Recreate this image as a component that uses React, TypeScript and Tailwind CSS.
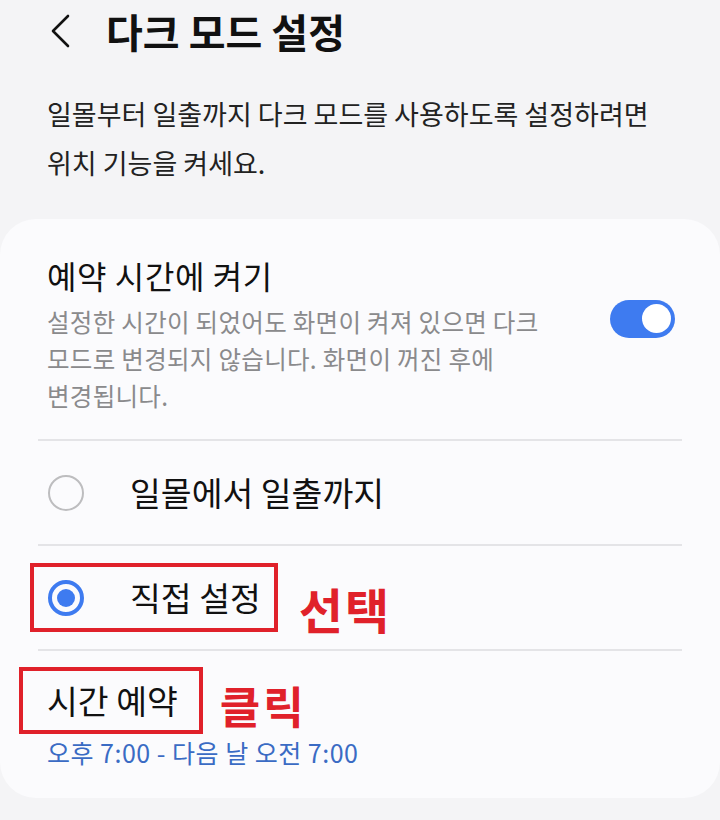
import React from "react";

function Radio({ checked }: { checked: boolean }) {
  return checked ? (
    <div className="w-[36px] h-[36px] rounded-full border-[4px] border-[#3e7bf0] flex items-center justify-center">
      <div className="w-[18px] h-[18px] rounded-full bg-[#3e7bf0]" />
    </div>
  ) : (
    <div className="w-[36px] h-[36px] rounded-full border-[2.5px] border-[#bdbdbf]" />
  );
}

export default function App() {
  return (
    <div className="w-[720px] min-h-[820px] bg-[#f4f4f6] text-[#111] font-['Noto_Sans_CJK_KR','Noto_Sans',sans-serif]">
      {/* Header */}
      <div className="h-[62px] flex items-center pl-[50px]">
        <svg width="20" height="34" viewBox="0 0 20 34" fill="none">
          <path d="M18 2 L3 17 L18 32" stroke="#111" strokeWidth="2.6" strokeLinecap="round" strokeLinejoin="round" />
        </svg>
        <h1 className="ml-[36px] text-[40px] font-bold leading-none">다크 모드 설정</h1>
      </div>

      {/* Description */}
      <p className="px-[47px] pt-[27px] text-[27px] leading-[49px] text-[#222]">
        일몰부터 일출까지 다크 모드를 사용하도록 설정하려면
        <br />
        위치 기능을 켜세요.
      </p>

      {/* Card */}
      <div className="mt-[32px] bg-[#fbfbfd] rounded-[36px] pt-[36px] pb-[31px]">
        <div className="flex items-center pl-[47px] pr-[45px]">
          <div className="flex-1">
            <div className="text-[32px] leading-[40px] tracking-[0.6px] text-[#111]">예약 시간에 켜기</div>
            <div className="mt-[8px] text-[24.5px] leading-[37px] tracking-[0.3px] text-[#8a8a8c]">
              설정한 시간이 되었어도 화면이 켜져 있으면 다크
              <br />
              모드로 변경되지 않습니다. 화면이 꺼진 후에
              <br />
              변경됩니다.
            </div>
          </div>
          <div className="w-[65px] h-[38px] rounded-full bg-[#3e7bf0] flex items-center justify-end pr-[4px] -mt-[32px]">
            <div className="w-[29px] h-[29px] rounded-full bg-white" />
          </div>
        </div>

        <div className="mx-[38px] mt-[25px] h-[2px] bg-[#e4e4e7]" />

        {/* Option 1 */}
        <div className="h-[103px] flex items-center pl-[48px]">
          <Radio checked={false} />
          <span className="ml-[46px] text-[33.5px] text-[#111]">일몰에서 일출까지</span>
        </div>

        <div className="mx-[38px] h-[2px] bg-[#e4e4e7]" />

        {/* Option 2 */}
        <div className="h-[103px] flex items-center pl-[30px]">
          <div className="h-[69px] flex items-center border-[4px] border-[#e0212a] pl-[14px] pr-[13px]">
            <Radio checked />
            <span className="ml-[46px] text-[33.5px] text-[#111]">직접 설정</span>
          </div>
          <span className="ml-[21px] mt-[20px] text-[48px] leading-[40px] font-bold tracking-[2px] text-[#e0212a]">선택</span>
        </div>

        <div className="mx-[38px] h-[2px] bg-[#e4e4e7]" />

        {/* Schedule */}
        <div className="pt-[16px]">
          <div className="flex items-center pl-[19px]">
            <div className="h-[67px] flex items-center border-[4px] border-[#e0212a] pl-[24px] pr-[21px]">
              <span className="text-[33.5px] text-[#111]">시간 예약</span>
            </div>
            <span className="ml-[17px] mt-[8px] text-[44px] leading-[40px] font-bold tracking-[3px] text-[#e0212a]">클릭</span>
          </div>
          <div className="pl-[47px] mt-[3px] text-[25px] leading-[30px] tracking-[0.5px] text-[#3a6bc4]">오후 7:00 - 다음 날 오전 7:00</div>
        </div>
      </div>
    </div>
  );
}
